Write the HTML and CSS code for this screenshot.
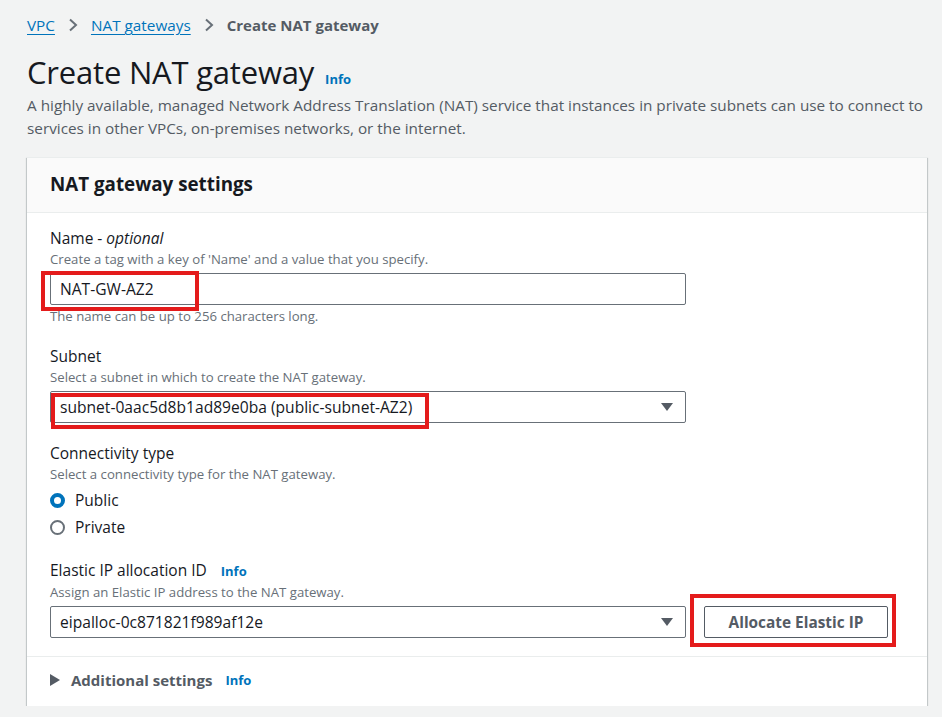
FILE: index.html
```html
<!DOCTYPE html>
<html lang="en">
<head>
<meta charset="utf-8">
<title>Create NAT gateway</title>
<link rel="stylesheet" href="styles.css">
</head>
<body>
<main class="page">
  <nav class="crumbs">
    <a class="crumb-link" href="#">VPC</a>
    <svg class="chev" width="10" height="14" viewBox="0 0 10 14"><path d="M2 1.5 L8 7 L2 12.5" fill="none" stroke="#687078" stroke-width="2"/></svg>
    <a class="crumb-link" href="#">NAT gateways</a>
    <svg class="chev" width="10" height="14" viewBox="0 0 10 14"><path d="M2 1.5 L8 7 L2 12.5" fill="none" stroke="#687078" stroke-width="2"/></svg>
    <span class="crumb-current">Create NAT gateway</span>
  </nav>

  <header class="page-head">
    <div class="title-row">
      <h1 class="title">Create NAT gateway</h1>
      <a class="info" href="#">Info</a>
    </div>
    <p class="page-desc">A highly available, managed Network Address Translation (NAT) service that instances in private subnets can use to connect to services in other VPCs, on-premises networks, or the internet.</p>
  </header>

  <section class="panel">
    <div class="panel-head">
      <h2 class="panel-title">NAT gateway settings</h2>
    </div>
    <div class="panel-body">
      <div class="field">
        <div class="label">Name - <i>optional</i></div>
        <div class="hint">Create a tag with a key of 'Name' and a value that you specify.</div>
        <div class="control">
          <div class="input">NAT-GW-AZ2</div>
          <span class="mark mark-name"></span>
        </div>
        <div class="hint constraint">The name can be up to 256 characters long.</div>
      </div>

      <div class="field">
        <div class="label">Subnet</div>
        <div class="hint">Select a subnet in which to create the NAT gateway.</div>
        <div class="control">
          <div class="input select">
            <span>subnet-0aac5d8b1ad89e0ba (public-subnet-AZ2)</span>
            <svg class="caret" width="12" height="8" viewBox="0 0 12 8"><path d="M0 0 H12 L6 8 Z" fill="#545b64"/></svg>
          </div>
          <span class="mark mark-subnet"></span>
        </div>
      </div>

      <div class="field">
        <div class="label">Connectivity type</div>
        <div class="hint">Select a connectivity type for the NAT gateway.</div>
        <div class="radios">
          <label class="radio"><span class="dot on"></span>Public</label>
          <label class="radio"><span class="dot"></span>Private</label>
        </div>
      </div>

      <div class="field">
        <div class="label">Elastic IP allocation ID <a class="info" href="#">Info</a></div>
        <div class="hint">Assign an Elastic IP address to the NAT gateway.</div>
        <div class="eip-row">
          <div class="input select">
            <span>eipalloc-0c871821f989af12e</span>
            <svg class="caret" width="12" height="8" viewBox="0 0 12 8"><path d="M0 0 H12 L6 8 Z" fill="#545b64"/></svg>
          </div>
          <div class="control">
            <button class="btn" type="button">Allocate Elastic IP</button>
            <span class="mark mark-btn"></span>
          </div>
        </div>
      </div>
    </div>
    <div class="panel-foot">
      <svg class="tri" width="10" height="12" viewBox="0 0 10 12"><path d="M0 0 L10 6 L0 12 Z" fill="#545b64"/></svg>
      <span class="expand-title">Additional settings</span>
      <a class="info" href="#">Info</a>
    </div>
  </section>
</main>
</body>
</html>
```

FILE: styles.css
```css
* { box-sizing: border-box; }
html, body { margin: 0; padding: 0; }
body {
  background: #f2f3f3;
  font-family: "Open Sans", "Noto Sans", sans-serif;
  color: #16191f;
  font-size: 14px;
}
.page {
  width: 900px;
  margin-left: 27px;
  padding-top: 14px;
}
.crumbs {
  display: flex;
  align-items: center;
  gap: 13px;
  height: 22px;
  font-size: 15.3px;
}
.crumb-link {
  color: #0073bb;
  text-decoration: underline;
  text-underline-offset: 3px;
}
.chev { display: block; }
.crumb-current { color: #545b64; font-weight: 700; font-size: 15px; }

.page-head { margin-top: 18px; }
.title-row { display: flex; align-items: baseline; gap: 11px; }
.title {
  margin: 0;
  font-size: 31px;
  font-weight: 400;
  line-height: 36px;
  letter-spacing: -0.2px;
}
.info {
  color: #0073bb;
  font-weight: 700;
  font-size: 13px;
  text-decoration: none;
}
.page-desc {
  margin: 4px 0 0;
  color: #545b64;
  font-size: 15.3px;
  line-height: 23px;
  width: 910px;
}

.panel {
  margin-top: 17px;
  background: #fff;
  box-shadow: 0 1px 1px 0 rgba(0,28,36,.3), 1px 1px 1px 0 rgba(0,28,36,.15), -1px 1px 1px 0 rgba(0,28,36,.15);
  border-top: 1px solid #eaeded;
}
.panel-head {
  background: #fafafa;
  border-bottom: 1px solid #eaeded;
  height: 55px;
  display: flex;
  align-items: center;
  padding: 0 23px 3px;
}
.panel-title {
  margin: 0;
  font-size: 18.8px;
  font-weight: 700;
}
.panel-body {
  padding: 14px 23px 18px;
  display: flex;
  flex-direction: column;
  gap: 19px;
}
.field { display: flex; flex-direction: column; }
.label { font-size: 15.5px; line-height: 22px; display: flex; align-items: baseline; gap: 14px; }
.label i { margin-left: -10px; }
.hint { font-size: 13.2px; color: #687078; line-height: 20px; }
.constraint { margin-top: 1px; }
.control { position: relative; margin-top: 4px; }
.input {
  width: 636px;
  height: 32px;
  border: 1px solid #687078;
  border-radius: 2px;
  padding: 0 9px;
  display: flex;
  align-items: center;
  font-size: 15.6px;
  background: #fff;
}
.select { justify-content: space-between; padding-right: 12px; }
.caret { display: block; }
.mark {
  position: absolute;
  border: 4px solid #e41b1b;
  pointer-events: none;
}
.mark-name { left: -9px; top: -2px; width: 158px; height: 40px; }
.mark-subnet { left: 1px; top: 2px; width: 378px; height: 36px; }
.mark-btn { left: -14px; top: -12px; width: 206px; height: 53px; }

.radios { display: flex; flex-direction: column; gap: 3px; margin-top: 4px; margin-bottom: 1px; }
.radio { display: flex; align-items: center; gap: 10px; font-size: 15.5px; line-height: 24px; }
.dot {
  width: 15px; height: 15px; border-radius: 50%;
  border: 2px solid #687078;
  background: #fff;
}
.dot.on { border: 4px solid #0073bb; }

.eip-row { display: flex; align-items: flex-start; gap: 18px; margin-top: 4px; }
.eip-row .control { margin-top: 0; }
.btn {
  width: 184px;
  height: 32px;
  background: #fff;
  border: 1px solid #545b64;
  border-radius: 2px;
  color: #545b64;
  font-family: inherit;
  font-weight: 700;
  font-size: 15.4px;
  padding: 0;
}

.panel-foot {
  border-top: 1px solid #eaeded;
  height: 50px;
  display: flex;
  align-items: center;
  padding: 0 23px 4px;
}
.tri { display: block; margin-right: 11px; }
.expand-title { font-weight: 700; color: #545b64; font-size: 15px; margin-right: 13px; }
```
